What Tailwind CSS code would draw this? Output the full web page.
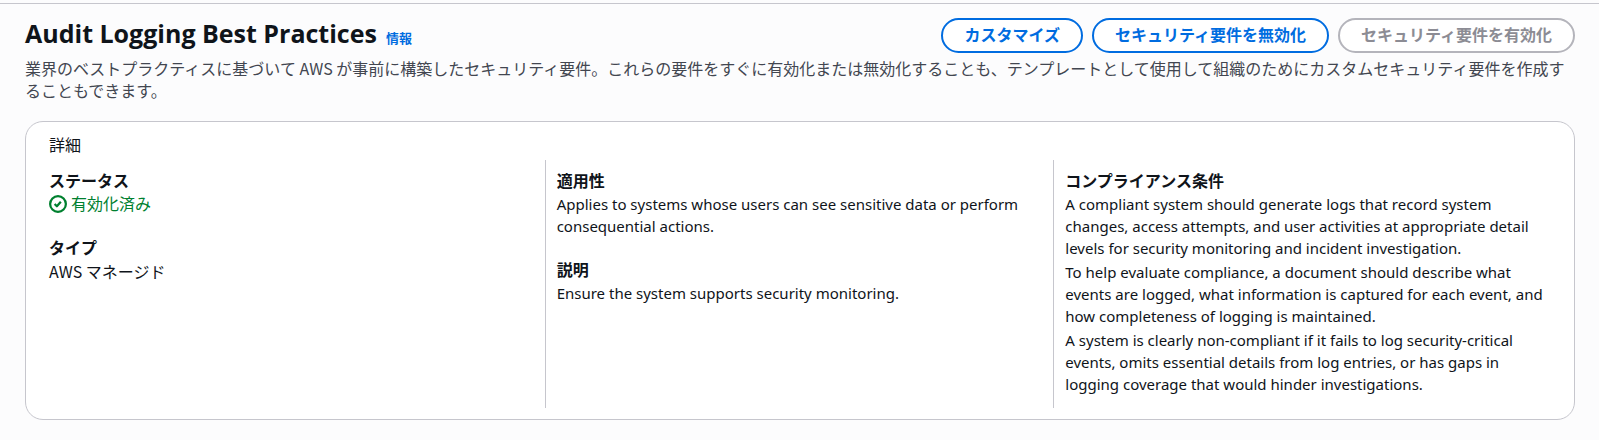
<!DOCTYPE html>
<html lang="ja">
  <head>
    <meta charset="UTF-8" />
    <meta name="viewport" content="width=device-width, initial-scale=1.0" />
    <title>Audit Logging Best Practices</title>
    <script src="https://cdn.jsdelivr.net/npm/@tailwindcss/browser@4"></script>
  </head>
  <body class="bg-[#fcfcfd] font-['Noto_Sans','Noto_Sans_CJK_JP',sans-serif] text-[15px] leading-[22px] text-[#0f141a]">
    <main class="mt-[3px] border-t border-[#c6c6cd] pr-6 pl-[25px] pt-[14px] pb-5">
      <header>
        <div class="flex items-start justify-between">
          <div class="flex items-baseline gap-[9px]">
            <h1 class="font-['Open_Sans',sans-serif] text-[25px] leading-[30px] font-bold">Audit Logging Best Practices</h1>
            <a href="#" class="text-[13px] font-bold text-[#006ce0]">情報</a>
          </div>
          <div class="flex gap-[9px]">
            <button type="button" class="h-[35px] rounded-full border-2 border-[#006ce0] bg-white px-[21px] pb-[2px] text-[16px] leading-[22px] font-bold text-[#006ce0]">カスタマイズ</button>
            <button type="button" class="h-[35px] rounded-full border-2 border-[#006ce0] bg-white px-[21px] pb-[2px] text-[16px] leading-[22px] font-bold text-[#006ce0]">セキュリティ要件を無効化</button>
            <button type="button" disabled class="h-[35px] rounded-full border-2 border-[#b4b4bb] bg-white px-[21px] pb-[2px] text-[16px] leading-[22px] font-bold text-[#8c8c94]">セキュリティ要件を有効化</button>
          </div>
        </div>
        <p class="mt-1 font-['Noto_Sans_CJK_JP',sans-serif] text-[16px] text-[#424650]">
          業界のベストプラクティスに基づいて AWS が事前に構築したセキュリティ要件。これらの要件をすぐに有効化または無効化することも、テンプレートとして使用して組織のためにカスタムセキュリティ要件を作成することもできます。
        </p>
      </header>

      <section class="mt-5 rounded-[18px] border border-[#c6c6cd] bg-white pt-[12px] pr-3 pb-[11px] pl-[10px]">
        <h2 class="px-[13px] text-[16px]">詳細</h2>
        <div class="mt-1 grid grid-cols-3">
          <dl class="px-[13px] pt-[10px] pb-[13px]">
            <dt class="text-[16px] font-bold">ステータス</dt>
            <dd class="mt-px flex items-center gap-1 text-[16px] text-[#00802f]">
              <svg class="size-[18px]" viewBox="0 0 16 16" fill="none" stroke="currentColor" stroke-width="2" aria-hidden="true">
                <circle cx="8" cy="8" r="7" />
                <path d="m5 8 2 2 3.521-4.01" stroke-linejoin="round" />
              </svg>
              有効化済み
            </dd>
            <dt class="mt-[22px] text-[16px] font-bold">タイプ</dt>
            <dd class="mt-px font-['Noto_Sans_CJK_JP',sans-serif] text-[16px]">AWS マネージド</dd>
          </dl>
          <dl class="border-l border-[#c6c6cd] px-[11px] pt-[10px] pb-[13px]">
            <dt class="text-[16px] font-bold">適用性</dt>
            <dd class="mt-px">Applies to systems whose users can see sensitive data or perform consequential actions.</dd>
            <dt class="mt-[22px] text-[16px] font-bold">説明</dt>
            <dd class="mt-px">Ensure the system supports security monitoring.</dd>
          </dl>
          <dl class="border-l border-[#c6c6cd] px-[11px] pt-[10px] pb-[13px]">
            <dt class="text-[16px] font-bold">コンプライアンス条件</dt>
            <dd class="mt-px flex flex-col gap-[2px]">
              <p>A compliant system should generate logs that record system changes, access attempts, and user activities at appropriate detail levels for security monitoring and incident investigation.</p>
              <p>To help evaluate compliance, a document should describe what events are logged, what information is captured for each event, and how completeness of logging is maintained.</p>
              <p>A system is clearly non-compliant if it fails to log security-critical events, omits essential details from log entries, or has gaps in logging coverage that would hinder investigations.</p>
            </dd>
          </dl>
        </div>
      </section>
    </main>
  </body>
</html>
